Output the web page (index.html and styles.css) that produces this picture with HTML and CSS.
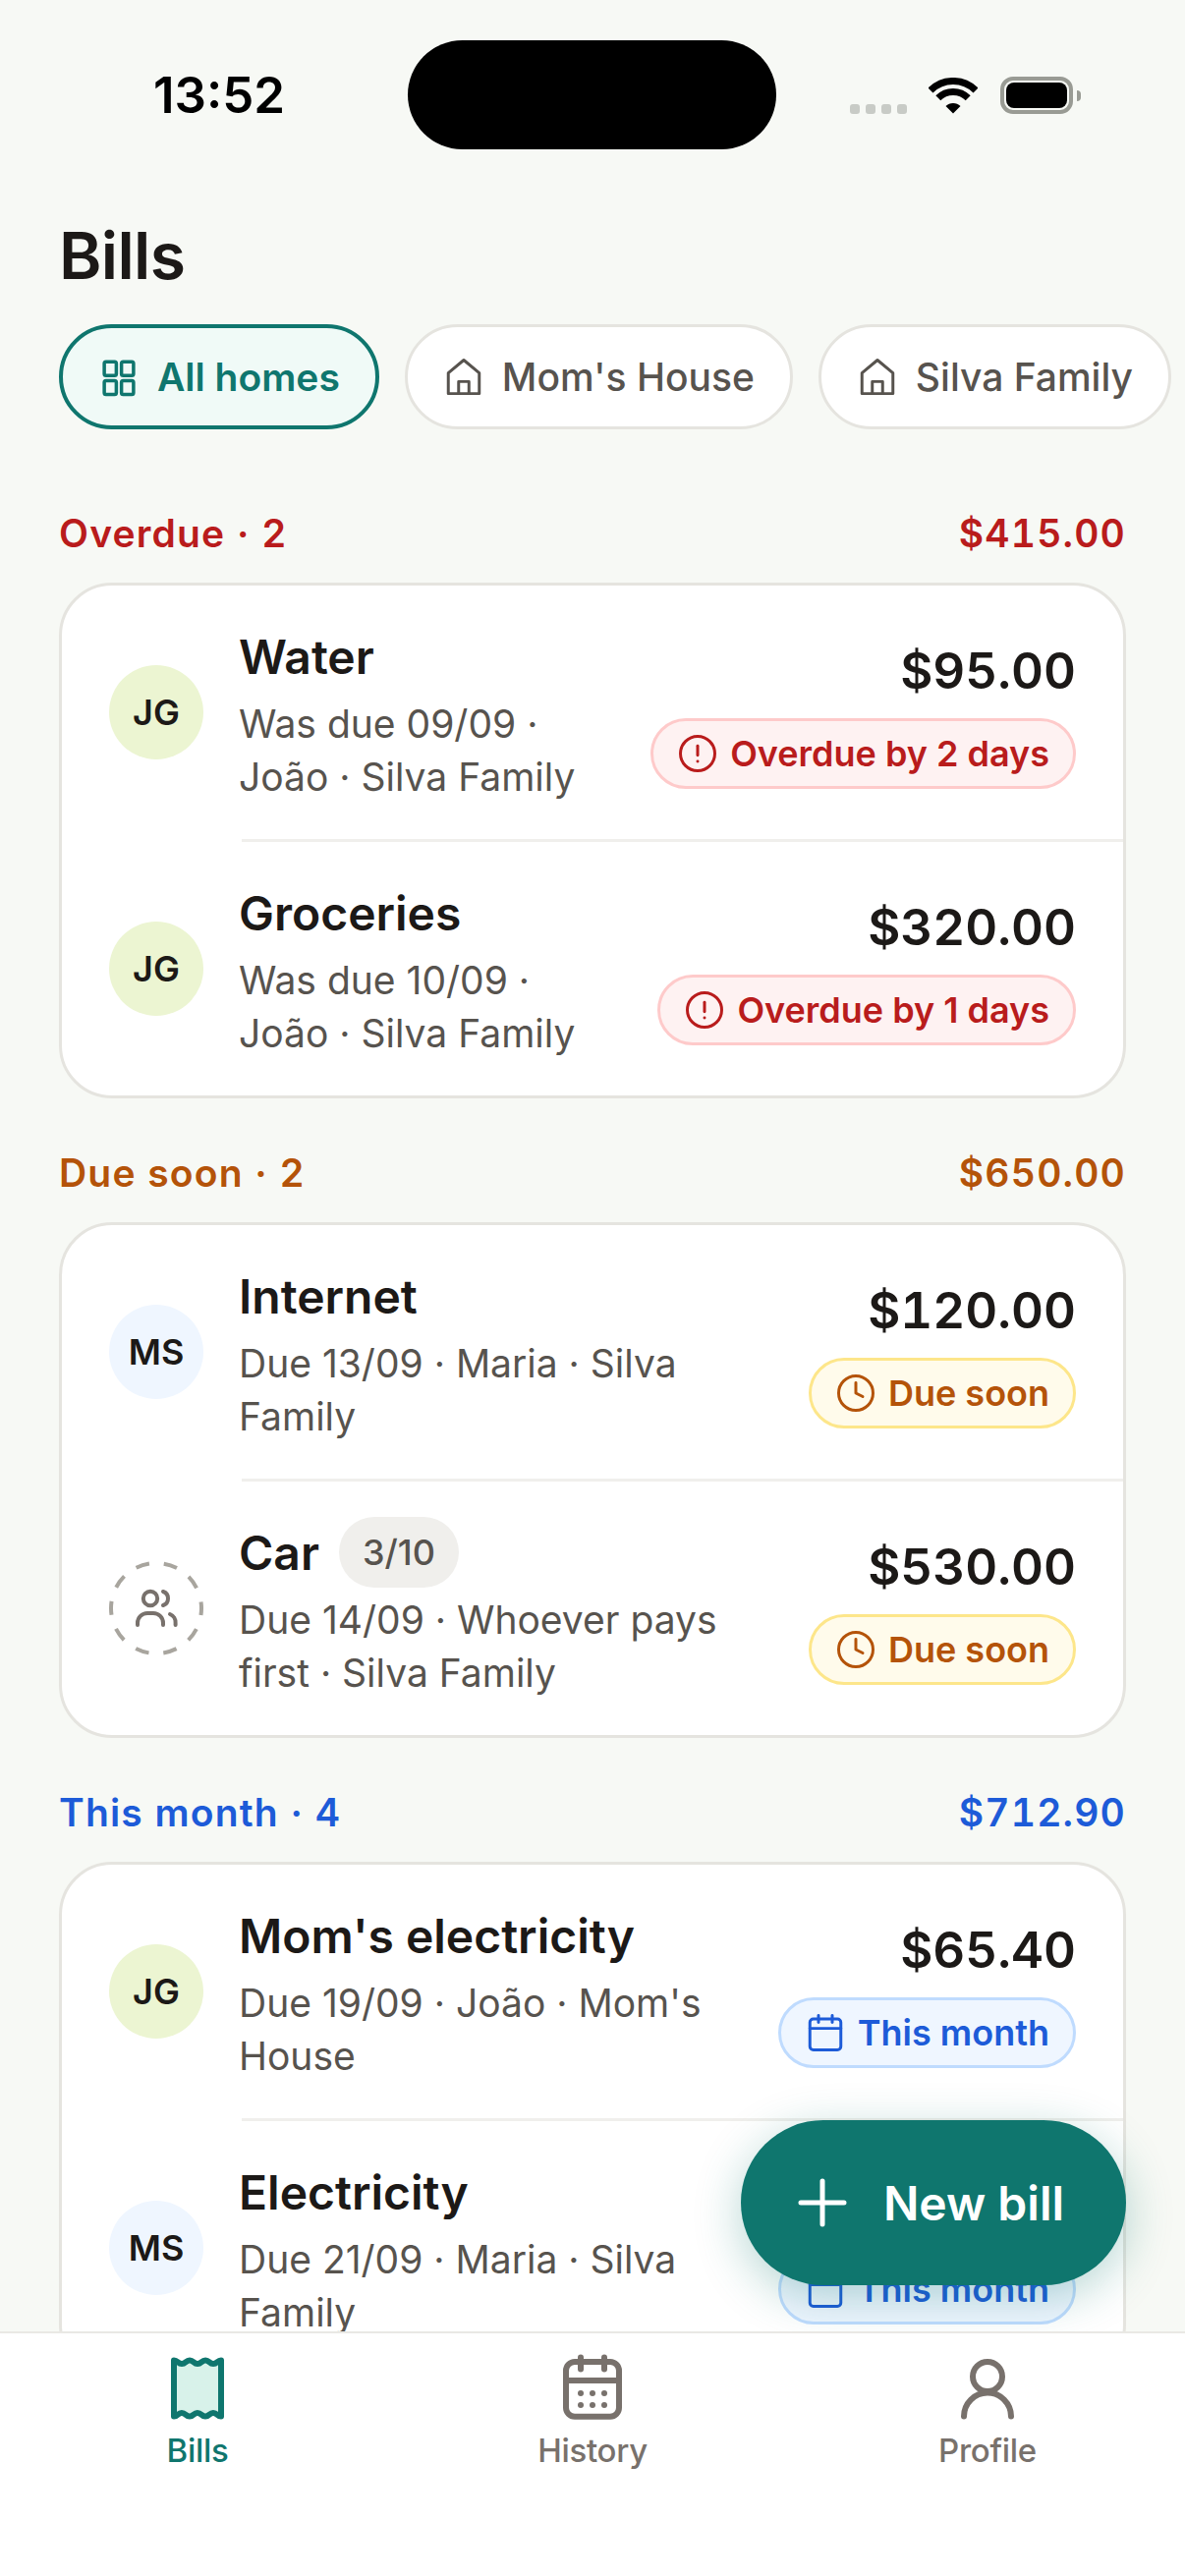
FILE: index.html
```html
<!DOCTYPE html>
<html lang="en">
<head>
  <meta charset="UTF-8">
  <meta name="viewport" content="width=device-width, initial-scale=1">
  <title>Bills</title>
  <link rel="stylesheet" href="styles.css">
</head>
<body>

  <div class="status-bar">
    <span class="time">13:52</span>
    <div class="island"></div>
    <div class="status-icons">
      <div class="signal"><i></i><i></i><i></i><i></i></div>
      <svg class="wifi" width="50" height="37" viewBox="0 0 50 37">
        <path d="M2 13A32.5 32.5 0 0 1 48 13" fill="none" stroke="#000" stroke-width="7"/>
        <path d="M9.8 20.8A21.5 21.5 0 0 1 40.2 20.8" fill="none" stroke="#000" stroke-width="7"/>
        <path d="M25 36.5L17.5 29A10.6 10.6 0 0 1 32.5 29Z" fill="#000"/>
      </svg>
      <div class="battery"><div class="battery-level"></div></div>
      <div class="battery-cap"></div>
    </div>
  </div>

  <main class="content">
    <h1 class="page-title">Bills</h1>

    <div class="chips">
      <div class="chip active">
        <svg class="icon-42" viewBox="0 0 24 24"><rect x="3.5" y="3" width="7" height="8" rx="1"/><rect x="13.5" y="3" width="7" height="8" rx="1"/><rect x="3.5" y="14" width="7" height="8" rx="1"/><rect x="13.5" y="14" width="7" height="8" rx="1"/></svg>
        All homes
      </div>
      <div class="chip">
        <svg class="icon-42 thin" viewBox="0 0 24 24"><path d="M3 21.5V9.500L12 2l9 7.500v12z"/><path d="M9 21.5v-7h6v7"/></svg>
        Mom's House
      </div>
      <div class="chip">
        <svg class="icon-42 thin" viewBox="0 0 24 24"><path d="M3 21.5V9.500L12 2l9 7.500v12z"/><path d="M9 21.5v-7h6v7"/></svg>
        Silva Family
      </div>
    </div>

    <section class="group overdue">
      <div class="group-head"><span>Overdue · 2</span><span>$415.00</span></div>
      <div class="card">
        <div class="row">
          <div class="avatar green">JG</div>
          <div class="info">
            <div class="name-line"><span class="name">Water</span></div>
            <div class="meta">Was due 09/09 · João · Silva Family</div>
          </div>
          <div class="side">
            <div class="amount">$95.00</div>
            <div class="badge">
              <svg class="icon-42 thin" viewBox="0 0 24 24"><circle cx="12" cy="12" r="10"/><path d="M12 7.500v5.500"/><path d="M12 16.500v.1"/></svg>
              Overdue by 2 days
            </div>
          </div>
        </div>
        <div class="row">
          <div class="avatar green">JG</div>
          <div class="info">
            <div class="name-line"><span class="name">Groceries</span></div>
            <div class="meta">Was due 10/09 · João · Silva Family</div>
          </div>
          <div class="side">
            <div class="amount">$320.00</div>
            <div class="badge">
              <svg class="icon-42 thin" viewBox="0 0 24 24"><circle cx="12" cy="12" r="10"/><path d="M12 7.500v5.500"/><path d="M12 16.500v.1"/></svg>
              Overdue by 1 days
            </div>
          </div>
        </div>
      </div>
    </section>

    <section class="group soon">
      <div class="group-head"><span>Due soon · 2</span><span>$650.00</span></div>
      <div class="card">
        <div class="row">
          <div class="avatar blue">MS</div>
          <div class="info">
            <div class="name-line"><span class="name">Internet</span></div>
            <div class="meta">Due 13/09 · Maria · Silva Family</div>
          </div>
          <div class="side">
            <div class="amount">$120.00</div>
            <div class="badge">
              <svg class="icon-42 thin" viewBox="0 0 24 24"><circle cx="12" cy="12" r="10"/><path d="M12 6v6l4 2"/></svg>
              Due soon
            </div>
          </div>
        </div>
        <div class="row">
          <div class="avatar open">
            <svg width="96" height="96" viewBox="0 0 96 96">
              <circle class="dashes" cx="48" cy="48" r="46"/>
              <g transform="translate(24 24) scale(2)">
                <circle cx="9" cy="7" r="3.600"/>
                <path d="M2.500 20.500v-1a5 5 0 0 1 5-5h3a5 5 0 0 1 5 5v1"/>
                <path d="M15.500 3.500a3.700 3.700 0 0 1 0 7"/>
                <path d="M19 15a4.500 4.500 0 0 1 2.800 4.500v1"/>
              </g>
            </svg>
          </div>
          <div class="info">
            <div class="name-line"><span class="name">Car</span><span class="count">3/10</span></div>
            <div class="meta">Due 14/09 · Whoever pays first · Silva Family</div>
          </div>
          <div class="side">
            <div class="amount">$530.00</div>
            <div class="badge">
              <svg class="icon-42 thin" viewBox="0 0 24 24"><circle cx="12" cy="12" r="10"/><path d="M12 6v6l4 2"/></svg>
              Due soon
            </div>
          </div>
        </div>
      </div>
    </section>

    <section class="group month">
      <div class="group-head"><span>This month · 4</span><span>$712.90</span></div>
      <div class="card">
        <div class="row">
          <div class="avatar green">JG</div>
          <div class="info">
            <div class="name-line"><span class="name">Mom's electricity</span></div>
            <div class="meta">Due 19/09 · João · Mom's House</div>
          </div>
          <div class="side">
            <div class="amount">$65.40</div>
            <div class="badge">
              <svg class="icon-42 thin" viewBox="0 0 24 24"><rect x="3" y="4" width="18" height="18" rx="2"/><path d="M3 9.500h18"/><path d="M8 2v4"/><path d="M16 2v4"/></svg>
              This month
            </div>
          </div>
        </div>
        <div class="row">
          <div class="avatar blue">MS</div>
          <div class="info">
            <div class="name-line"><span class="name">Electricity</span></div>
            <div class="meta">Due 21/09 · Maria · Silva Family</div>
          </div>
          <div class="side">
            <div class="amount"></div>
            <div class="badge">
              <svg class="icon-42 thin" viewBox="0 0 24 24"><rect x="3" y="4" width="18" height="18" rx="2"/><path d="M3 9.500h18"/><path d="M8 2v4"/><path d="M16 2v4"/></svg>
              This month
            </div>
          </div>
        </div>
      </div>
    </section>

    <button class="fab">
      <svg width="50" height="50" viewBox="0 0 50 50"><path d="M25 3v44M3 25h44"/></svg>
      New bill
    </button>
  </main>

  <nav class="tabs">
    <div class="tab current">
      <svg class="tab-icon" viewBox="0 0 24 24"><path class="fill" d="M4 2.500c1.330 0 1.330 1.200 2.670 1.200s1.330-1.200 2.670-1.200 1.330 1.200 2.670 1.200 1.330-1.200 2.670-1.200 1.330 1.200 2.670 1.200S18.670 2.500 20 2.500V21.500c-1.330 0-1.330-1.200-2.670-1.200s-1.330 1.200-2.670 1.200-1.330-1.200-2.670-1.200-1.330 1.200-2.670 1.200-1.330-1.200-2.670-1.200S5.330 21.500 4 21.500z"/></svg>
      <span>Bills</span>
    </div>
    <div class="tab">
      <svg class="tab-icon" viewBox="0 0 24 24"><rect x="3" y="3" width="18" height="18.600" rx="3"/><path d="M3 9.300h18"/><path d="M8 1.500v4"/><path d="M16 1.500v4"/><g class="dots"><circle cx="8" cy="13.700" r="1"/><circle cx="12" cy="13.700" r="1"/><circle cx="16" cy="13.700" r="1"/><circle cx="8" cy="17.700" r="1"/><circle cx="12" cy="17.700" r="1"/><circle cx="16" cy="17.700" r="1"/></g></svg>
      <span>History</span>
    </div>
    <div class="tab">
      <svg class="tab-icon" viewBox="0 0 24 24"><circle cx="12" cy="8" r="5"/><path d="M4 21.500a8 8 0 0 1 16 0"/></svg>
      <span>Profile</span>
    </div>
  </nav>

</body>
</html>
```

FILE: styles.css
```css
* {
  box-sizing: border-box;
}

body {
  margin: 0;
  width: 1206px;
  height: 2622px;
  display: flex;
  flex-direction: column;
  overflow: hidden;
  background: #f7f9f5;
  color: #1c1917;
  font-family: Inter, "Noto Sans", sans-serif;
}

/* Status bar */
.status-bar {
  display: flex;
  align-items: flex-start;
  height: 152px;
  padding: 41px 106px 0 156px;
}

.time {
  width: 132px;
  margin-top: 31px;
  font-size: 51px;
  line-height: 50px;
  font-weight: 600;
  color: #000;
}

.island {
  width: 375px;
  height: 111px;
  margin-left: 127px;
  border-radius: 56px;
  background: #000;
}

.status-icons {
  display: flex;
  align-items: flex-start;
  margin-left: auto;
  margin-top: 37px;
}

.signal {
  display: flex;
  gap: 6px;
  margin-top: 28px;
  margin-right: 22px;
}

.signal i {
  width: 10px;
  height: 10px;
  border-radius: 3px;
  background: #c8cbc6;
}

.wifi {
  margin-top: 1px;
  margin-right: 23px;
}

.battery {
  width: 74px;
  height: 38px;
  padding: 2px;
  border: 4px solid #999b94;
  border-radius: 13px;
}

.battery-level {
  width: 100%;
  height: 100%;
  border-radius: 8px;
  background: #000;
}

.battery-cap {
  width: 4px;
  height: 11px;
  margin: 14px 0 0 4px;
  border-radius: 0 6px 6px 0;
  background: #999b94;
}

/* Scrolling part */
.content {
  position: relative;
  flex: 1;
  min-height: 0;
  overflow: hidden;
  padding: 0 60px;
}

.page-title {
  margin: 72px 0 0;
  font-size: 66px;
  line-height: 72px;
  font-weight: 600;
  letter-spacing: -0.66px;
}

.chips {
  display: flex;
  gap: 26px;
  margin-top: 34px;
  white-space: nowrap;
}

.chip {
  display: flex;
  align-items: center;
  gap: 18px;
  height: 107px;
  padding: 0 36px;
  border: 3px solid #e5e4df;
  border-radius: 54px;
  background: #fff;
  color: #57534e;
  font-size: 39px;
  font-weight: 500;
}

.chip.active {
  border: 4.5px solid #0f766e;
  background: #f0faf7;
  color: #0f766e;
  font-weight: 600;
}

.icon-42 {
  flex: none;
  width: 42px;
  height: 42px;
  fill: none;
  stroke: currentColor;
  stroke-width: 2;
  stroke-linecap: round;
  stroke-linejoin: round;
}

.icon-42.thin {
  stroke-width: 1.7;
}

/* Groups */
.group {
  margin-top: 52px;
}

.chips + .group {
  margin-top: 82px;
}

.group-head {
  display: flex;
  justify-content: space-between;
  margin-bottom: 26px;
  font-size: 39px;
  line-height: 48px;
  font-weight: 600;
  letter-spacing: 1.17px;
  font-variant-numeric: tabular-nums;
}

.overdue .group-head { color: #b91c1c; }
.soon .group-head { color: #b45309; }
.month .group-head { color: #1d5bd8; }

.card {
  border: 3px solid #e5e4df;
  border-radius: 54px;
  background: #fff;
}

.row {
  position: relative;
  display: flex;
  align-items: center;
  gap: 36px;
  height: 258px;
  padding: 36px 48px;
}

.row + .row {
  margin-top: 3px;
}

/* divider stops at the text column */
.row + .row::before {
  content: "";
  position: absolute;
  top: -3px;
  left: 183px;
  right: 0;
  height: 3px;
  background: #f0efec;
}

.avatar {
  flex: none;
  display: flex;
  align-items: center;
  justify-content: center;
  width: 96px;
  height: 96px;
  border-radius: 50%;
  font-size: 36px;
  font-weight: 600;
}

.avatar.green { background: #ecf5d2; }
.avatar.blue { background: #eff6ff; }

.avatar.open svg {
  fill: none;
  stroke: #78716c;
  stroke-width: 2;
  stroke-linecap: round;
}

.avatar.open .dashes {
  stroke: #a8a59e;
  stroke-width: 4;
  stroke-linecap: butt;
  stroke-dasharray: 14 14.900;
  stroke-dashoffset: 7;
}

.info {
  flex: 1;
  min-width: 0;
}

.name-line {
  display: flex;
  align-items: center;
  gap: 20px;
  height: 72px;
  margin-bottom: 6px;
}

.name {
  font-size: 48px;
  font-weight: 600;
}

.count {
  display: flex;
  align-items: center;
  height: 72px;
  padding: 0 24px;
  border-radius: 36px;
  background: #f0efec;
  color: #57534e;
  font-size: 36px;
  font-weight: 500;
}

.meta {
  font-size: 39px;
  line-height: 54px;
  color: #57534e;
}

.side {
  flex: none;
  display: flex;
  flex-direction: column;
  align-items: flex-end;
}

.amount {
  height: 72px;
  margin-bottom: 12px;
  font-size: 51px;
  line-height: 72px;
  font-weight: 600;
  font-variant-numeric: tabular-nums;
}

.badge {
  display: flex;
  align-items: center;
  gap: 12px;
  height: 72px;
  padding: 0 24px;
  border: 3px solid;
  border-radius: 36px;
  font-size: 36px;
  font-weight: 600;
  white-space: nowrap;
}

.overdue .badge { color: #b91c1c; background: #fef2f2; border-color: #fecaca; }
.soon .badge { color: #b45309; background: #fffbeb; border-color: #fde68a; }
.month .badge { color: #1d5bd8; background: #eff6ff; border-color: #bfdbfe; }

.fab {
  position: absolute;
  right: 60px;
  bottom: 47px;
  display: flex;
  align-items: center;
  gap: 37px;
  height: 168px;
  padding: 0 63px 0 58px;
  border: none;
  border-radius: 84px;
  background: #0f766e;
  box-shadow: 0 12px 48px rgba(15, 118, 110, 0.3);
  color: #fff;
  font-family: inherit;
  font-size: 48px;
  font-weight: 600;
}

.fab svg {
  fill: none;
  stroke: #fff;
  stroke-width: 5;
  stroke-linecap: round;
}

/* Bottom tabs */
.tabs {
  flex: none;
  display: grid;
  grid-template-columns: repeat(3, 1fr);
  height: 249px;
  padding-top: 20px;
  border-top: 2px solid #e9e8e4;
  background: #fff;
}

.tab {
  display: flex;
  flex-direction: column;
  align-items: center;
  color: #78716c;
  font-size: 33px;
  line-height: 44px;
  font-weight: 500;
  letter-spacing: -0.3px;
}

.tab-icon {
  width: 72px;
  height: 72px;
  margin-bottom: 5px;
  fill: none;
  stroke: currentColor;
  stroke-width: 2;
  stroke-linecap: round;
  stroke-linejoin: round;
}

.tab-icon .dots {
  fill: currentColor;
  stroke: none;
}

.tab.current {
  color: #0f766e;
}

.tab-icon .fill {
  fill: #d8f2ea;
}
```
